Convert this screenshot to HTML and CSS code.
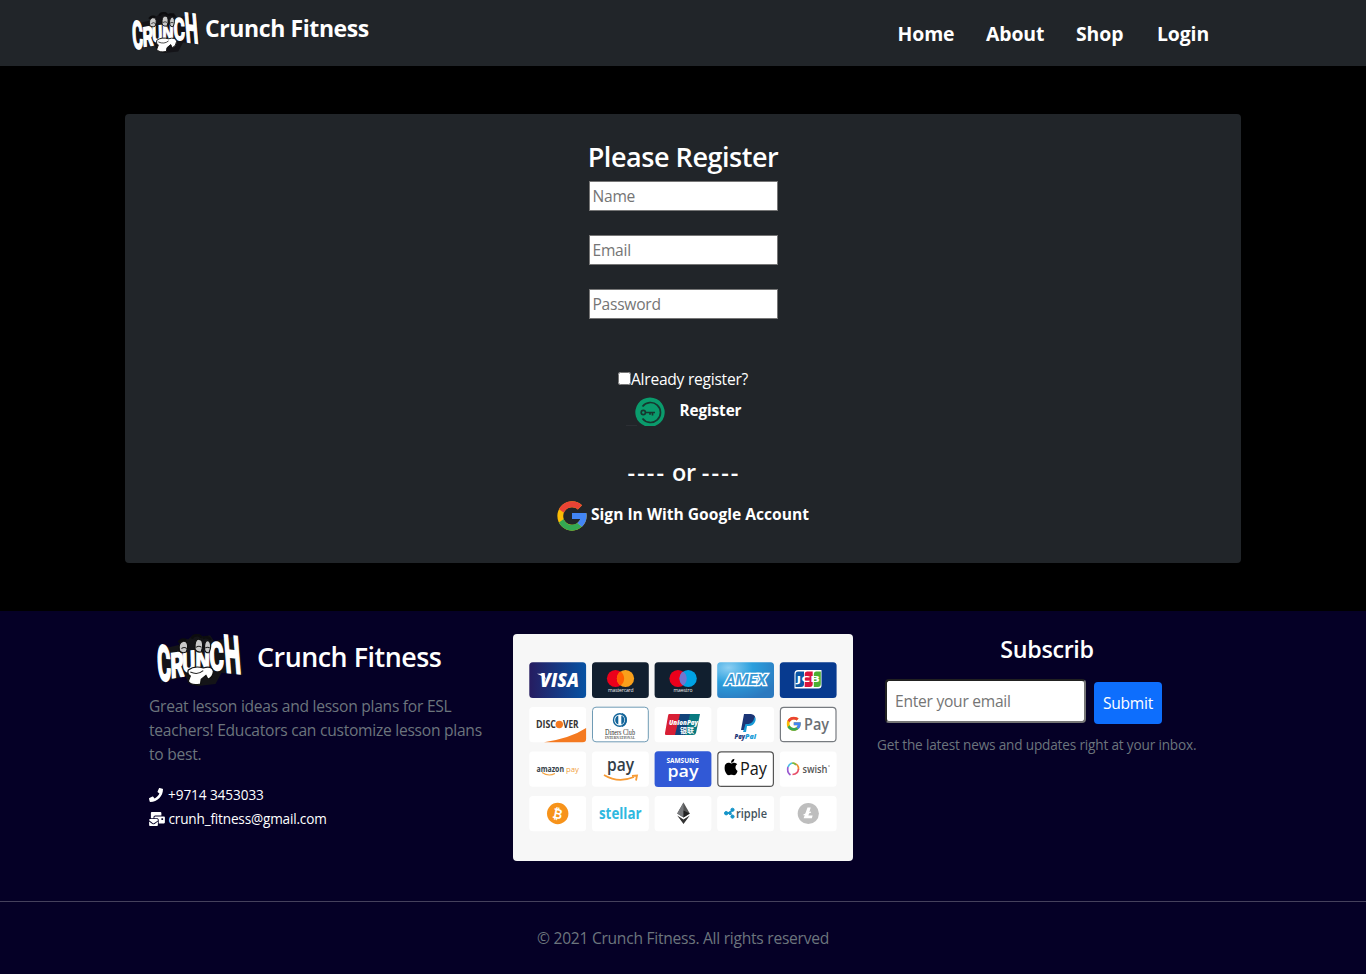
FILE: index.html
```html
<!DOCTYPE html>
<html lang="en">
<head>
<meta charset="utf-8">
<title>Crunch Fitness</title>
<link rel="stylesheet" href="styles.css">
</head>
<body>
<svg class="defs" width="0" height="0" aria-hidden="true">
  <symbol id="crunch" viewBox="0 0 253 156" preserveAspectRatio="none" overflow="visible">
    <path d="M2 32L36 40 66 32 72 14 92 16 106 4 122 0 136 8 156 4 168 22 240 4 252 122 190 116 172 150 120 156 92 146 84 126 12 146Z" fill="#141418"/>
    <g fill="#fff" stroke="#fff" stroke-width="5" stroke-linejoin="miter" font-family="Roboto, sans-serif" font-weight="700" font-size="100">
      <text transform="matrix(.6 .06 .08 1.46 4 137)">C</text>
      <text transform="matrix(.62 -.1 .04 1.02 41 132)">R</text>
      <text transform="matrix(.58 -.04 .02 .86 75 114)">U</text>
      <text transform="matrix(.6 .02 0 .86 113 108)">N</text>
      <text transform="matrix(.64 0 .05 1.16 156 108)">C</text>
      <text transform="matrix(.66 .08 .12 1.54 202 113)">H</text>
    </g>
    <g fill="#c9c9c9" stroke="#111" stroke-width="3.5">
      <path d="M66 50Q62 26 76 22Q92 20 90 42L86 54Q72 60 66 50Z"/>
      <path d="M112 32Q114 14 124 16Q136 16 134 40L130 54Q116 56 112 46Z"/>
      <path d="M140 34Q142 18 151 20Q160 24 157 44L153 56Q142 58 140 46Z"/>
      <path d="M92 108Q110 94 136 102Q162 94 166 112Q164 130 150 136L144 124 130 136 128 150Q100 156 92 142L98 126Q88 120 92 108Z" fill="#fff"/>
    </g>
    <path d="M72 44q8-7 16 0M115 40q8-6 16 0M142 42q7-5 13 0M98 114q22 10 38-4" fill="none" stroke="#222" stroke-width="3"/>
    <path d="M102 14Q106 2 122 4Q130 6 128 12M134 12Q150 4 158 18M64 26Q70 14 86 18" fill="none" stroke="#0c0c0e" stroke-width="8"/>
  </symbol>
  <symbol id="google" viewBox="3.5 3.5 41 41">
    <path fill="#fbbc05" d="M43.6 20H42v0H24v8h11.3C33.7 32.7 29.200 36 24 36c-6.600 0-12-5.400-12-12s5.400-12 12-12c3.100 0 5.800 1.200 8 3l5.700-5.700C34 6.100 29.300 4 24 4 13 4 4 13 4 24s9 20 20 20 20-9 20-20c0-1.300-.1-2.700-.4-4z"/>
    <path fill="#ea4335" d="M6.300 14.700l6.600 4.800C14.700 15.100 19 12 24 12c3.100 0 5.800 1.200 8 3l5.700-5.700C34 6.100 29.300 4 24 4 16.300 4 9.700 8.300 6.300 14.700z"/>
    <path fill="#34a853" d="M24 44c5.200 0 9.900-2 13.400-5.200l-6.200-5.200A12 12 0 0 1 24 36c-5.200 0-9.600-3.300-11.300-8l-6.500 5C9.500 39.600 16.200 44 24 44z"/>
    <path fill="#4285f4" d="M43.600 20H24v8h11.300a12 12 0 0 1-4.100 5.600l6.200 5.200C37 39.200 44 34 44 24c0-1.300-.1-2.700-.4-4z"/>
  </symbol>
</svg>

<header class="navbar">
  <div class="navbar-inner">
    <a class="brand"><svg class="brand-logo"><use href="#crunch"/></svg><span>Crunch Fitness</span></a>
    <nav class="nav">
      <a class="nav-home">Home</a><a class="nav-about">About</a><a class="nav-shop">Shop</a><a class="nav-login">Login</a>
    </nav>
  </div>
</header>

<main class="page">
  <section class="card">
    <h3 class="title">Please Register</h3>
    <form class="fields">
      <input type="text" placeholder="Name">
      <input type="text" placeholder="Email">
      <input type="password" placeholder="Password">
    </form>
    <label class="already"><input type="checkbox"><span>Already register?</span></label>
    <button class="register">
      <svg width="40" height="30" viewBox="0 0 40 30">
        <path d="M1 28.500h11" stroke="#30343a" stroke-width=".7"/>
        <path d="M20 29A14.700 14.700 0 1 1 30 29Z" fill="#0a9b6c"/>
        <g fill="none" stroke="#17372f" stroke-width="1.700">
          <path d="M17.500 9.500A10 10 0 1 1 17.500 21.500"/>
          <circle cx="18.300" cy="15.500" r="2.100"/>
          <path d="M20.500 15.500H30M27.500 16v2.500M25 16v1.800"/>
        </g>
      </svg>
      <span>Register</span>
    </button>
    <h4 class="or"><span class="dash">----</span> or <span class="dash">----</span></h4>
    <button class="google"><svg width="30" height="30"><use href="#google"/></svg><span>Sign In With Google Account</span></button>
  </section>
</main>

<footer class="footer">
  <div class="columns">
    <div class="about">
      <div class="about-brand"><svg class="about-logo"><use href="#crunch"/></svg><h3>Crunch Fitness</h3></div>
      <p>Great lesson ideas and lesson plans for ESL<br>teachers! Educators can customize lesson plans<br>to best.</p>
      <div class="contact phone"><svg width="14" height="14" viewBox="0 0 512 512"><path fill="#fff" d="M493.400 24.600l-104-24c-11.300-2.600-22.900 3.300-27.500 13.900l-48 112c-4.200 9.800-1.400 21.300 6.900 28l60.600 49.600c-36 76.700-98.900 140.500-177.200 177.200l-49.600-60.600c-6.800-8.300-18.200-11.100-28-6.900l-112 48C3.900 366.500-2 378.100.6 389.400l24 104C27.100 504.200 36.700 512 48 512c256.100 0 464-207.500 464-464 0-11.200-7.700-20.900-18.600-23.400z"/></svg><span>+9714 3453033</span></div>
      <div class="contact mail"><svg width="16" height="14" viewBox="0 0 576 512"><path fill="#fff" d="M160 448c-25.600 0-51.200-22.400-64-32-64-44.800-83.200-60.800-96-70.400V480c0 17.670 14.330 32 32 32h256c17.670 0 32-14.330 32-32V345.600c-12.800 9.600-32 25.600-96 70.400-12.800 9.600-38.400 32-64 32zm128-192H32c-17.670 0-32 14.330-32 32v16c25.600 19.200 22.400 19.200 115.200 86.400 9.600 6.400 28.800 25.600 44.800 25.600s35.200-19.200 44.800-22.400c92.800-67.200 89.600-67.200 115.200-86.400V288c0-17.670-14.330-32-32-32zm256-96H224c-17.670 0-32 14.330-32 32v32h96c33.210 0 60.590 25.420 63.710 57.830l.29-.29V416h192c17.670 0 32-14.330 32-32V192c0-17.670-14.330-32-32-32zm-32 128h-64v-64h64v64zm-352-96c0-35.290 28.710-64 64-64h224V32c0-17.670-14.330-32-32-32H96C78.330 0 64 14.330 64 32v192h96v-32z"/></svg><span>crunh_fitness@gmail.com</span></div>
    </div>

    <svg class="payments" width="340" height="227" viewBox="0 0 340 227">
      <defs>
        <linearGradient id="visa"><stop stop-color="#261c60"/><stop offset="1" stop-color="#0752a3"/></linearGradient>
        <radialGradient id="amex" cx=".2" cy=".15" r=".95"><stop stop-color="#8ccff3"/><stop offset=".45" stop-color="#2b9fdd"/><stop offset="1" stop-color="#2b79bf"/></radialGradient>
      </defs>
      <rect width="340" height="227" fill="#f7f7f7"/>
      <g fill="#fff">
        <rect x="16.300" y="28.300" width="56.800" height="35.700" rx="3.500" fill="url(#visa)"/>
        <rect x="79" y="28.300" width="56.800" height="35.700" rx="3.500" fill="#111f2f"/>
        <rect x="141.600" y="28.300" width="56.800" height="35.700" rx="3.500" fill="#111f2f"/>
        <rect x="204.200" y="28.300" width="56.800" height="35.700" rx="3.500" fill="url(#amex)"/>
        <rect x="266.800" y="28.300" width="56.800" height="35.700" rx="3.500" fill="#073a8f"/>
        <rect x="16.300" y="73" width="56.800" height="35.300" rx="3.500"/>
        <rect x="79.500" y="73.200" width="55.800" height="34.600" rx="3.500" stroke="#6f9bb5"/>
        <rect x="141.600" y="73" width="56.800" height="35.300" rx="3.500"/>
        <rect x="204.200" y="73" width="56.800" height="35.300" rx="3.500"/>
        <rect x="267.400" y="73.400" width="55.600" height="34.300" rx="3.500" stroke="#777b80" stroke-width="1.200"/>
        <rect x="16.300" y="117.500" width="56.800" height="35.300" rx="3.500"/>
        <rect x="79" y="117.500" width="56.800" height="35.300" rx="3.500"/>
        <rect x="141.600" y="117.300" width="56.800" height="35.700" rx="3.500" fill="#3159d6"/>
        <rect x="204.800" y="117.800" width="55.600" height="34.600" rx="3.500" stroke="#555" stroke-width="1.200"/>
        <rect x="266.800" y="117.500" width="56.800" height="35.300" rx="3.500"/>
        <rect x="16.300" y="162" width="56.800" height="35.300" rx="3.500"/>
        <rect x="79" y="162" width="56.800" height="35.300" rx="3.500"/>
        <rect x="141.600" y="162" width="56.800" height="35.300" rx="3.500"/>
        <rect x="204.200" y="162" width="56.800" height="35.300" rx="3.500"/>
        <rect x="266.800" y="162" width="56.800" height="35.300" rx="3.500"/>
      </g>
      <text class="bi" x="27" y="53.300" font-size="19" textLength="39" lengthAdjust="spacingAndGlyphs" fill="#fff">VISA</text>
      <path d="M24 39.700h7l2 6q-3-4-9-6z" fill="#fff"/>
      <circle cx="102.500" cy="44.500" r="8.600" fill="#eb001b"/><circle cx="112.500" cy="44.500" r="8.600" fill="#f9a01b"/>
      <path d="M107.500 37.500a8.600 8.600 0 0 1 0 14 8.600 8.600 0 0 1 0-14z" fill="#ff5f00"/>
      <text class="s" x="95" y="57.800" font-size="5" textLength="25.500" fill="#eee">mastercard</text>
      <circle cx="165" cy="44.500" r="8.600" fill="#eb001b"/><circle cx="175.200" cy="44.500" r="8.600" fill="#00a2e5"/>
      <path d="M170.100 37.500a8.600 8.600 0 0 1 0 14 8.600 8.600 0 0 1 0-14z" fill="#7375cf"/>
      <text class="s" x="160.500" y="57.800" font-size="5" textLength="19" fill="#eee">maestro</text>
      <text class="amex" x="212.500" y="51" font-size="14" textLength="41" lengthAdjust="spacingAndGlyphs" fill="#3a9ad6" stroke="#fff" stroke-width="2.600" paint-order="stroke">AMEX</text>
      <path d="M285 36h23.500v15.500q0 3-3 3h-24V39.500q0-3.500 3.500-3.500z" fill="#fff"/>
      <path d="M285 37.500h6v12.500q0 3-3 3h-5.500v-12.500q0-3 2.500-3z" fill="#0b56a5"/><path d="M294 37.500h5.700v12.500q0 3-3 3h-5V40q0-2.500 2.300-2.500z" fill="#d9143c"/><path d="M303 37.500h4.800v12.500q0 3-3 3h-4V40q0-2.500 2.200-2.500z" fill="#4caf32"/>
      <text class="b" x="283.500" y="48.400" font-size="8.500" textLength="23.500" lengthAdjust="spacingAndGlyphs" fill="#fff">JCB</text>
      <text class="b" x="23" y="94.300" font-size="10" textLength="20" lengthAdjust="spacingAndGlyphs" fill="#343434">DISC</text><circle cx="46.300" cy="90.500" r="3.700" fill="#f47920"/><text class="b" x="50" y="94.300" font-size="10" textLength="15.500" lengthAdjust="spacingAndGlyphs" fill="#343434">VER</text>
      <path d="M31 108.300Q58 104 73.100 94v11q0 3.300-3.500 3.300z" fill="#f47920"/>
      <circle cx="106.800" cy="86" r="6.300" fill="#fff" stroke="#14659a" stroke-width="1.400"/><path d="M105.300 81.500v9a4.800 4.800 0 0 1 0-9zM108.300 81.500v9a4.800 4.800 0 0 0 0-9z" fill="#14659a"/><path d="M109 80a6.500 6.500 0 0 1 0 12" fill="none" stroke="#14659a" stroke-width="2"/>
      <text class="serif" x="92" y="101" font-size="8.500" textLength="30" lengthAdjust="spacingAndGlyphs" fill="#333">Diners Club</text><text class="serif b" x="92" y="105.200" font-size="4" textLength="30" lengthAdjust="spacingAndGlyphs" fill="#555">INTERNATIONAL</text>
      <path d="M156 80h12l-5 21h-10q-1.500 0-1-2l3-17q.3-2 1-2z" fill="#d81f35"/><path d="M167 80h11l-5 21h-11z" fill="#11437a"/><path d="M177 80h10l-4 19q-.5 2-3 2h-8z" fill="#087980"/>
      <text class="bi" x="156" y="90.500" font-size="6" textLength="29" lengthAdjust="spacingAndGlyphs" fill="#fff">UnionPay</text><text class="cjk" x="167" y="98.500" font-size="6.500" textLength="14" lengthAdjust="spacingAndGlyphs" fill="#fff">银联</text>
      <path d="M231 80h7q5.500 1 4 6-1.500 5-7 5h-2l-1 5h-4z" fill="#1b3576"/><path d="M241.500 83q2 2 .5 5-2 4-6 4h-2l-1 6h-3l1-3 1.500-5h3q5-1 6-7z" fill="#179bd7"/>
      <text class="bi" x="221.500" y="104.700" font-size="6.700" textLength="10.500" lengthAdjust="spacingAndGlyphs" fill="#1b3576">Pay</text><text class="bi" x="232" y="104.700" font-size="6.700" textLength="11" lengthAdjust="spacingAndGlyphs" fill="#179bd7">Pal</text>
      <use href="#google" x="273.500" y="82.500" width="14.500" height="14.500"/>
      <text class="m" x="291" y="96" font-size="16.500" textLength="25" lengthAdjust="spacingAndGlyphs" fill="#6c7074">Pay</text>
      <text class="b" x="23.500" y="137.500" font-size="8" textLength="27.500" lengthAdjust="spacingAndGlyphs" fill="#333e48">amazon</text><text class="s" x="53" y="137.500" font-size="8" textLength="13" lengthAdjust="spacingAndGlyphs" fill="#f2a340">pay</text><path d="M29 138.500q6.500 4.500 13 1" fill="none" stroke="#f2a340" stroke-width="1.100"/>
      <text class="m" x="94" y="137" font-size="18" textLength="27" lengthAdjust="spacingAndGlyphs" fill="#333e48">pay</text><path d="M91 141q14 8.500 30 2M119 142l5-.5-1 5" fill="none" stroke="#f79b34" stroke-width="1.800"/>
      <text class="b" x="153.500" y="129.300" font-size="6.500" textLength="32.500" fill="#fff">SAMSUNG</text><text class="m" x="154.500" y="143.300" font-size="17" textLength="31" lengthAdjust="spacingAndGlyphs" fill="#fff">pay</text>
      <svg x="211.300" y="124.500" width="13.500" height="17" viewBox="0 25 384 460" preserveAspectRatio="none"><path d="M318.700 268.700c-.2-36.700 16.400-64.400 50-84.800-18.800-26.900-47.200-41.700-84.700-44.600-35.500-2.800-74.300 20.700-88.500 20.700-15 0-49.400-19.700-76.400-19.700C63.300 141.200 4 184.800 4 273.500q0 39.300 14.400 81.200c12.800 36.700 59 126.700 107.200 125.200 25.200-.6 43-17.900 75.800-17.900 31.800 0 48.300 17.900 76.400 17.900 48.600-.7 90.400-82.500 102.600-119.300-65.200-30.700-61.700-90-61.700-91.900zm-56.600-164.200c27.300-32.400 24.800-61.900 24-72.500-24.100 1.400-52 16.400-67.900 34.900-17.500 19.800-27.800 44.300-25.600 71.900 26.100 2 49.900-11.400 69.500-34.300z"/></svg>
      <text class="s" x="227" y="141" font-size="19" textLength="27" lengthAdjust="spacingAndGlyphs" fill="#151515">Pay</text>
      <g fill="none" stroke-width="1.700"><path d="M277.500 141q-4-3-2.500-8" stroke="#9b5bd0"/><path d="M275 133q1-3 4-4" stroke="#4abbe8"/><path d="M280 129q6 1 5.500 6.500" stroke="#f28a30"/><path d="M285.500 135q-.5 5-6 5.500" stroke="#e8506a"/><path d="M279 129q3 .2 4 2" stroke="#72bf44"/></g>
      <text class="m" x="289.500" y="138.500" font-size="10" textLength="25" lengthAdjust="spacingAndGlyphs" fill="#555">swish</text><circle cx="316" cy="132" r=".7" fill="#777"/>
      <circle cx="44.700" cy="179.500" r="10.700" fill="#f7931a"/><text class="b" x="40" y="184.500" font-size="14" textLength="9.500" lengthAdjust="spacingAndGlyphs" fill="#fff" transform="rotate(12 44.700 179.500)">₿</text>
      <text class="b" x="86" y="184.800" font-size="16" textLength="42.500" lengthAdjust="spacingAndGlyphs" fill="#2fb8df">stellar</text>
      <path d="M170.500 168.500l6.300 11-6.300 4-6.300-4z" fill="#555"/><path d="M170.500 168.500v15l-6.300-4z" fill="#77797c"/><path d="M170.500 176.500v7l6.300-4z" fill="#222"/><path d="M164.200 181.500l6.300 4 6.300-4-6.300 8.500z" fill="#333"/>
      <g fill="#1695c9" stroke="#1695c9"><circle cx="213.200" cy="179.200" r="1.700"/><circle cx="217" cy="179.200" r="1.300"/><circle cx="219.500" cy="175.800" r="1.600"/><circle cx="219.500" cy="182.600" r="1.600"/><path d="M213.200 179.200h3.800l2.500-3.400M217 179.200l2.500 3.400"/></g>
      <text class="m" x="223" y="183.500" font-size="13" textLength="31" lengthAdjust="spacingAndGlyphs" fill="#42525c">ripple</text>
      <circle cx="295.300" cy="179.500" r="10.600" fill="#bebebe"/><path d="M294.500 173.500h3.200l-2.300 8h4.200l-.7 2.700h-8.300z" fill="#fff"/><path d="M290.500 181l7.500-3" stroke="#fff" stroke-width="1.200"/>
    </svg>

    <div class="subscribe">
      <h4>Subscrib</h4>
      <div class="row"><input type="email" placeholder="Enter your email"><button>Submit</button></div>
      <small>Get the latest news and updates right at your inbox.</small>
    </div>
  </div>
  <div class="copyright"><span>© 2021 Crunch Fitness. All rights reserved</span></div>
</footer>
</body>
</html>
```

FILE: styles.css
```css
* { box-sizing: border-box; }
body { margin: 0; background: #000; color: #fff; font: 15.600px/24px "Open Sans", "Noto Sans", sans-serif; letter-spacing: -.26px; }
h3, h4, p { margin: 0; white-space: nowrap; }
svg { display: block; flex: none; }
span, a, small { white-space: nowrap; }
.defs { position: absolute; }
button, input { font: inherit; letter-spacing: inherit; }
button { border: 0; background: none; color: #fff; padding: 0; }

.navbar { height: 66px; background: #212529; }
.navbar-inner { width: 1116px; margin: 0 auto; padding-left: 7px; display: flex; justify-content: space-between; }
.brand { display: flex; gap: 5px; padding-top: 12px; font-size: 23px; line-height: 33px; font-weight: 700; letter-spacing: -.4px; }
.brand-logo { width: 68px; height: 41px; overflow: visible; }
.nav { display: flex; font-size: 19.400px; line-height: 30px; font-weight: 700; padding-top: 19px; letter-spacing: -.1px; }
.nav-home { width: 88.500px; }
.nav-about { width: 90px; }
.nav-shop { width: 81px; }
.nav-login { width: 84px; }

.page { padding: 48px 0; }
.card { width: 1116px; height: 449px; margin: 0 auto; padding-top: 26px; border-radius: 4px; background: #212529; display: flex; flex-direction: column; align-items: center; }
.title { font-size: 27px; line-height: 34px; font-weight: 600; letter-spacing: -.45px; }
.fields { display: flex; flex-direction: column; gap: 24px; padding-top: 7px; }
.fields input { width: 189px; height: 30px; padding: 1px 3px; border: 1px solid #767676; background: #fff; }
input::placeholder { color: #757575; }
.already { display: flex; align-items: center; margin-top: 48px; height: 24px; }
.already input { width: 13px; height: 13px; margin: 0 0 1px; }
.register { display: flex; gap: 15px; margin-top: 6px; height: 30px; font-size: 15.300px; font-weight: 700; line-height: 27px; letter-spacing: -.1px; }
.or { font-size: 23.500px; line-height: 29px; font-weight: 600; margin-top: 31px; margin-left: 2px; }
.dash { letter-spacing: 2.100px; }
.google { display: flex; gap: 4px; margin-top: 14px; height: 30px; font-size: 15.600px; font-weight: 700; line-height: 27px; letter-spacing: 0; }

.footer { height: 363px; background: #050026; color: #6c757d; }
.columns { width: 1068px; height: 290px; margin: 0 auto; padding-top: 23px; display: grid; grid-template-columns: repeat(3, 340px); column-gap: 24px; align-items: start; }
.about-brand { display: flex; gap: 14px; padding-left: 8px; height: 60px; }
.about-logo { width: 86px; height: 52px; overflow: visible; }
.about-brand h3 { font-size: 26.800px; line-height: 46px; font-weight: 600; color: #fff; letter-spacing: -.46px; }
.contact { display: flex; align-items: center; gap: 3.500px; height: 24px; color: #fff; font-size: 13.600px; letter-spacing: -.18px; }
.phone { margin-top: 17px; gap: 5px; letter-spacing: -.08px; }
.payments { border-radius: 4px; }
.payments text { font-family: "Open Sans", sans-serif; letter-spacing: 0; }
.payments .b { font-weight: 700; }
.payments .m { font-weight: 600; }
.payments .bi { font-weight: 800; font-style: italic; }
.payments .amex { font-family: Roboto, sans-serif; font-weight: 700; font-style: italic; }
.payments .serif { font-family: "Liberation Serif", serif; }
.payments .cjk { font-family: "Noto Sans CJK SC", sans-serif; font-weight: 700; }
.subscribe { display: flex; flex-direction: column; align-items: flex-start; }
.subscribe h4 { align-self: center; font-size: 23.300px; line-height: 31px; font-weight: 600; color: #fff; letter-spacing: -.35px; }
.row { display: flex; gap: 8px; padding: 14px 0 0 8px; }
.row input { width: 201px; height: 44px; padding: 1px 8px; border: 2px inset #767676; border-radius: 4px; background: #fff; }
.row button { width: 68px; height: 42px; margin-top: 3px; border-radius: 4px; background: #0d6efd; }
.subscribe small { font-size: 13.600px; line-height: 21px; margin-top: 10px; letter-spacing: -.17px; }
.copyright { height: 73px; border-top: 1px solid #45415c; padding-top: 24px; text-align: center; }
```
